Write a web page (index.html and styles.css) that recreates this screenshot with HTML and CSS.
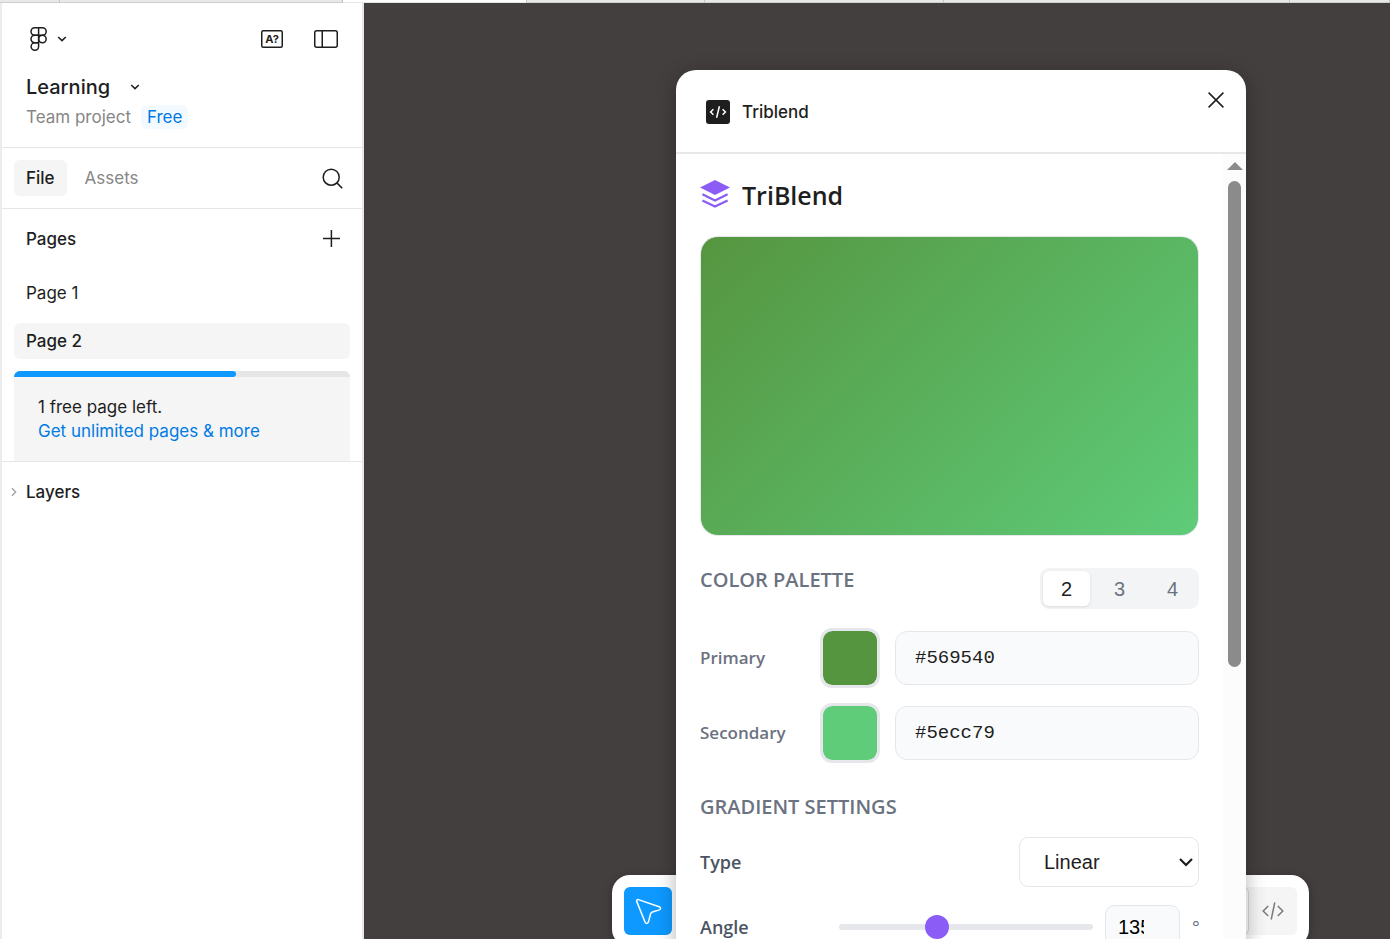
FILE: index.html
```html
<!DOCTYPE html>
<html lang="en">
<head>
  <meta charset="UTF-8">
  <meta name="viewport" content="width=device-width, initial-scale=1.0">
  <title>Learning</title>
  <link rel="stylesheet" href="styles.css">
</head>
<body>

  <div class="tab-strip">
    <span class="tab tab-pinned"></span>
    <span class="tab tab-wide"></span>
    <span class="tab tab-active"></span>
    <span class="tab tab-small"></span>
    <span class="tab tab-medium"></span>
    <span class="tab tab-large"></span>
    <span class="tab tab-rest"></span>
  </div>

  <div class="app">
    <aside class="sidebar">
      <header class="file-header">
        <div class="icon-row">
          <button class="icon-button logo-button" aria-label="Main menu">
            <svg width="18" height="24" viewBox="0 0 18 24" fill="none" stroke="#1e1e1e" stroke-width="1.5">
              <path d="M4.75 .75h7.7a3.75 3.75 0 0 1 0 7.5h-7.7a3.75 3.75 0 0 1 0-7.5z"/>
              <path d="M8.6 8.25H4.75a3.75 3.75 0 0 0 0 7.5H8.6"/>
              <circle cx="12.4" cy="12" r="3.75"/>
              <path d="M8.6 15.75H4.75a3.75 3.75 0 1 0 3.85 3.75V.75"/>
            </svg>
            <svg width="10" height="6" viewBox="0 0 10 6" fill="none" stroke="#1e1e1e" stroke-width="1.5">
              <path d="M1.2 1 5 4.6 8.8 1"/>
            </svg>
          </button>
          <div class="icon-group">
            <button class="icon-button" aria-label="Missing fonts">
              <svg width="22" height="18" viewBox="0 0 22 18">
                <rect x=".75" y=".75" width="20.5" height="16.5" rx="1.5" fill="none" stroke="#1e1e1e" stroke-width="1.5"/>
                <text class="font-glyph" x="11" y="13" text-anchor="middle">A?</text>
              </svg>
            </button>
            <button class="icon-button" aria-label="Toggle sidebar">
              <svg width="24" height="18" viewBox="0 0 24 18" fill="none" stroke="#1e1e1e" stroke-width="1.5">
                <rect x=".75" y=".75" width="22.5" height="16.5" rx="2"/>
                <path d="M8.25 .75v16.5"/>
              </svg>
            </button>
          </div>
        </div>
        <button class="file-name">
          Learning
          <svg width="10" height="6" viewBox="0 0 10 6" fill="none" stroke="#1e1e1e" stroke-width="1.5">
            <path d="M1.2 1 5 4.6 8.8 1"/>
          </svg>
        </button>
        <p class="file-team">Team project <span class="plan-badge">Free</span></p>
      </header>

      <nav class="side-tabs">
        <button class="side-tab selected">File</button>
        <button class="side-tab">Assets</button>
        <button class="icon-button push-right" aria-label="Search">
          <svg width="22" height="22" viewBox="0 0 22 22" fill="none" stroke="#1e1e1e" stroke-width="1.5">
            <circle cx="10.2" cy="10.2" r="8"/>
            <path d="M15.9 15.9 21.2 21.2"/>
          </svg>
        </button>
      </nav>

      <section class="pages">
        <div class="pages-header">
          <h2>Pages</h2>
          <button class="icon-button" aria-label="Add page">
            <svg width="18" height="18" viewBox="0 0 18 18" fill="none" stroke="#1e1e1e" stroke-width="1.5">
              <path d="M8.4 0v17M0 8.4h17"/>
            </svg>
          </button>
        </div>
        <ul class="page-list">
          <li><a href="#page-1">Page 1</a></li>
          <li><a href="#page-2" class="selected">Page 2</a></li>
        </ul>
        <div class="page-limit">
          <div class="limit-bar"><div class="limit-fill" style="width: 66%"></div></div>
          <div class="limit-text">
            <p>1 free page left.</p>
            <a href="#upgrade">Get unlimited pages &amp; more</a>
          </div>
        </div>
      </section>

      <section class="layers">
        <svg width="6" height="10" viewBox="0 0 6 10" fill="none" stroke="#a6a6a6" stroke-width="1.5">
          <path d="M1 1.2 4.6 5 1 8.8"/>
        </svg>
        <h2>Layers</h2>
      </section>
    </aside>

    <main class="canvas">
      <div class="toolbar">
        <button class="tool-button" aria-label="Move">
          <svg width="28" height="28" viewBox="0 0 28 28" fill="none" stroke="#fff" stroke-width="1.5" stroke-linejoin="round">
            <path d="M4.4 2.6 25.2 9.8c1.8.7 1.8 2.5.2 3.1l-7 2.1c-1 .4-1.5.8-1.8 1.7l-2.2 8.4c-.6 1.7-2.6 1.7-3.3.1L2.7 4.4c-.4-1.2.5-2.2 1.7-1.8z"/>
          </svg>
        </button>
        <div class="mode-switch">
          <span class="mode-current"></span>
          <button class="mode-button" aria-label="Dev mode">
            <svg width="22" height="18" viewBox="0 0 22 18" fill="none" stroke="#7a7a7a" stroke-width="1.5">
              <path d="M6.2 4 1.2 9l5 5M15.8 4l5 5-5 5M12.8 .5 9.2 17.5"/>
            </svg>
          </button>
        </div>
      </div>

      <div class="plugin">
        <header class="plugin-header">
          <svg width="24" height="24" viewBox="0 0 24 24" fill="none" stroke="#fff" stroke-width="1.5">
            <rect width="24" height="24" rx="3" fill="#1e1e1e" stroke="none"/>
            <path d="M7.4 9.2 4.6 12l2.8 2.8M16.6 9.2l2.8 2.8-2.8 2.8M13.4 6.2 10.6 17.8"/>
          </svg>
          <h1>Triblend</h1>
          <button class="close-button" aria-label="Close">
            <svg width="16" height="16" viewBox="0 0 16 16" fill="none" stroke="#1e1e1e" stroke-width="1.5">
              <path d="M.6 .6l14.8 14.8M15.4 .6.6 15.4"/>
            </svg>
          </button>
        </header>

        <div class="plugin-view">
          <div class="plugin-body">
            <div class="brand">
              <svg width="30" height="30" viewBox="0 0 30 30">
                <path d="M15 0l15 7.5L15 15 0 7.5z" fill="#8b5cf6"/>
                <path d="M2.4 14.2 15 20.5l12.6-6.3M2.4 20.4 15 26.6l12.6-6.2" fill="none" stroke="#8b5cf6" stroke-width="2.2"/>
              </svg>
              <h2>TriBlend</h2>
            </div>

            <div class="preview"></div>

            <section class="palette">
              <div class="section-header">
                <h3>COLOR PALETTE</h3>
                <div class="count-switch">
                  <button class="active">2</button>
                  <button>3</button>
                  <button>4</button>
                </div>
              </div>
              <div class="color-row">
                <label for="primary-hex">Primary</label>
                <input type="color" aria-label="Primary color" value="#569540">
                <input type="text" class="hex-input" id="primary-hex" value="#569540">
              </div>
              <div class="color-row">
                <label for="secondary-hex">Secondary</label>
                <input type="color" aria-label="Secondary color" value="#5ecc79">
                <input type="text" class="hex-input" id="secondary-hex" value="#5ecc79">
              </div>
            </section>

            <section class="settings">
              <h3>GRADIENT SETTINGS</h3>
              <div class="setting-row">
                <label for="type">Type</label>
                <div class="select-wrap">
                  <select id="type">
                    <option>Linear</option>
                    <option>Radial</option>
                  </select>
                  <svg class="select-arrow" width="14" height="9" viewBox="0 0 14 9" fill="none" stroke="#1e1e1e" stroke-width="2.2">
                    <path d="M1 1l6 6 6-6"/>
                  </svg>
                </div>
              </div>
              <div class="setting-row">
                <label for="angle">Angle</label>
                <div class="angle-control">
                  <input type="range" id="angle" min="0" max="360" value="135">
                  <input type="text" class="angle-value" aria-label="Angle in degrees" value="135">
                  <span class="unit">°</span>
                </div>
              </div>
            </section>
          </div>

          <div class="scrollbar">
            <span class="scroll-up"></span>
            <span class="scroll-thumb"></span>
          </div>
        </div>
      </div>
    </main>
  </div>

</body>
</html>
```
FILE: styles.css
```css
* {
  box-sizing: border-box;
}

body {
  margin: 0;
  height: 100vh;
  display: flex;
  flex-direction: column;
  overflow: hidden;
  font-family: Inter, "Liberation Sans", sans-serif;
  font-size: 17px;
  line-height: 24px;
  color: #1e1e1e;
  background-color: #fff;
}

h1, h2, h3, p, ul {
  margin: 0;
  padding: 0;
}

button {
  border: none;
  padding: 0;
  background: none;
  font: inherit;
  color: inherit;
  cursor: pointer;
}

svg {
  display: block;
  flex: none;
}

/* browser tabs above the app */
.tab-strip {
  display: flex;
  flex: none;
  height: 3px;
}

.tab {
  background-color: #e8e8e8;
  border-right: 1px solid #c4c4c4;
  border-bottom: 1px solid #cfcfcf;
}

.tab-pinned {
  width: 60px;
}

.tab-wide {
  width: 283px;
}

.tab-active {
  width: 184px;
  background-color: #fff;
  border-bottom-color: #e6e6e6;
}

.tab-small {
  width: 178px;
}

.tab-medium {
  width: 239px;
}

.tab-large {
  width: 346px;
}

.tab-rest {
  flex: 1;
}

.app {
  display: flex;
  flex: 1;
  min-height: 0;
}

/* left sidebar */
.sidebar {
  width: 364px;
  flex: none;
  background-color: #fff;
  border-left: 2px solid #ececec;
  border-right: 2px solid #e6e6e6;
}

.sidebar h2 {
  font-size: 17px;
  font-weight: 500;
}

.icon-button {
  min-width: 36px;
  height: 36px;
  display: flex;
  align-items: center;
  justify-content: center;
}

.file-header {
  padding: 12px 18px 18px 24px;
  border-bottom: 1px solid #e6e6e6;
}

.icon-row {
  display: flex;
  align-items: center;
  justify-content: space-between;
  height: 48px;
  margin-bottom: 12px;
}

.logo-button {
  gap: 9px;
  padding-left: 4px;
}

.icon-group {
  display: flex;
  gap: 18px;
}

.font-glyph {
  font-size: 11px;
  font-weight: 700;
  fill: #1e1e1e;
}

.file-name {
  display: flex;
  align-items: center;
  gap: 20px;
  margin-bottom: 6px;
  font-size: 20px;
  font-weight: 500;
}

.file-team {
  display: flex;
  align-items: center;
  gap: 10px;
  color: #868686;
}

.plan-badge {
  padding: 0 6px;
  border-radius: 6px;
  background-color: #f2f9ff;
  color: #007be5;
}

.side-tabs {
  display: flex;
  align-items: center;
  gap: 6px;
  height: 61px;
  padding: 0 12px;
  border-bottom: 1px solid #e6e6e6;
}

.side-tab {
  height: 36px;
  padding: 0 12px;
  border-radius: 6px;
  color: #868686;
}

.side-tab.selected {
  background-color: #f5f5f5;
  color: #1e1e1e;
  font-weight: 500;
}

.push-right {
  margin-left: auto;
}

.pages {
  border-bottom: 1px solid #e6e6e6;
  padding: 0 12px;
}

.pages-header {
  display: flex;
  align-items: center;
  justify-content: space-between;
  height: 60px;
  padding-left: 12px;
}

.page-list {
  display: flex;
  flex-direction: column;
  gap: 12px;
  margin: 6px 0 12px;
  list-style: none;
}

.page-list a {
  display: block;
  padding: 6px 12px;
  border-radius: 6px;
  color: #1e1e1e;
  text-decoration: none;
}

.page-list a.selected {
  background-color: #f5f5f5;
  font-weight: 500;
}

.page-limit {
  border-radius: 6px 6px 0 0;
  background-color: #f5f5f5;
  overflow: hidden;
}

.limit-bar {
  height: 6px;
  background-color: #e6e6e6;
}

.limit-fill {
  height: 6px;
  border-radius: 0 3px 3px 0;
  background-color: #0d99ff;
}

.limit-text {
  padding: 18px 24px;
}

.limit-text a {
  display: block;
  color: #007be5;
  text-decoration: none;
}

.layers {
  display: flex;
  align-items: center;
  gap: 9px;
  height: 60px;
  padding-left: 9px;
}

/* canvas and bottom toolbar */
.canvas {
  position: relative;
  flex: 1;
  min-width: 0;
  overflow: hidden;
  background-color: #433f3e;
}

.toolbar {
  position: absolute;
  right: 81px;
  bottom: -8px;
  width: 697px;
  display: flex;
  justify-content: space-between;
  padding: 12px;
  border-radius: 18px;
  background-color: #fff;
  box-shadow: 0 2px 8px rgba(0, 0, 0, 0.3);
}

.tool-button {
  width: 48px;
  height: 48px;
  display: flex;
  align-items: center;
  justify-content: center;
  border-radius: 6px;
  background-color: #0d99ff;
}

.mode-switch {
  display: flex;
  border-radius: 6px;
  background-color: #f5f5f5;
}

.mode-current {
  width: 48px;
  border: 1px solid #d9d9d9;
  border-radius: 6px;
  background-color: #fff;
}

.mode-button {
  width: 48px;
  display: flex;
  align-items: center;
  justify-content: center;
}

/* plugin window */
.plugin {
  position: absolute;
  top: 67px;
  right: 144px;
  bottom: -40px;
  width: 570px;
  display: flex;
  flex-direction: column;
  border-radius: 20px;
  background-color: #fff;
  box-shadow: 0 4px 20px rgba(0, 0, 0, 0.3);
  overflow: hidden;
}

.plugin-header {
  display: flex;
  align-items: center;
  gap: 12px;
  flex: none;
  height: 84px;
  padding: 6px 6px 4px 30px;
  border-bottom: 2px solid #e8e8e8;
}

.plugin-header h1 {
  font-size: 17px;
  font-weight: 500;
}

.close-button {
  width: 48px;
  height: 48px;
  display: flex;
  align-items: center;
  justify-content: center;
  align-self: flex-start;
  margin-left: auto;
}

.plugin-view {
  display: flex;
  flex: 1;
  min-height: 0;
}

.plugin-body {
  flex: 1;
  padding: 24px;
  font-family: "Open Sans", "Noto Sans", sans-serif;
  overflow: hidden;
}

.brand {
  display: flex;
  align-items: center;
  gap: 12px;
  height: 34px;
  margin-bottom: 24px;
}

.brand h2 {
  font-size: 25px;
  font-weight: 600;
  line-height: 34px;
}

.preview {
  height: 300px;
  margin-bottom: 32px;
  border: 1px solid #e5e7eb;
  border-radius: 18px;
  background: linear-gradient(135deg, #569540, #5ecc79);
}

.plugin-body h3 {
  font-size: 20px;
  font-weight: 600;
  line-height: 24px;
  color: #6b7280;
}

.section-header {
  display: flex;
  align-items: flex-start;
  justify-content: space-between;
  margin-bottom: 19px;
}

.count-switch {
  display: flex;
  gap: 6px;
  padding: 3px;
  border-radius: 9px;
  background-color: #f3f4f6;
}

.count-switch button {
  width: 47px;
  height: 35px;
  border-radius: 6px;
  font-family: "Liberation Sans", sans-serif;
  font-size: 20px;
  color: #6b7280;
}

.count-switch .active {
  background-color: #fff;
  color: #1e1e1e;
  box-shadow: 0 1px 3px rgba(0, 0, 0, 0.1);
}

.color-row {
  display: flex;
  align-items: center;
  gap: 15px;
  margin-bottom: 15px;
}

.color-row label {
  width: 105px;
  font-size: 17px;
  font-weight: 600;
  color: #6b7280;
}

input[type="color"] {
  appearance: none;
  width: 60px;
  height: 60px;
  padding: 0;
  border: 3px solid #e5e7eb;
  border-radius: 12px;
  background: #e5e7eb;
  overflow: hidden;
}

input[type="color"]::-webkit-color-swatch-wrapper {
  padding: 0;
}

input[type="color"]::-webkit-color-swatch {
  border: none;
  border-radius: 9px;
}

.hex-input {
  flex: 1;
  min-width: 0;
  height: 54px;
  padding: 0 19px;
  border: 1px solid #e5e7eb;
  border-radius: 12px;
  background-color: #f9fafb;
  font-family: "Liberation Mono", monospace;
  font-size: 19px;
  color: #1e1e1e;
}

.settings {
  display: flex;
  flex-direction: column;
  gap: 18px;
  margin-top: 32px;
}

.setting-row {
  display: flex;
  align-items: center;
  justify-content: space-between;
}

.setting-row label {
  font-size: 18px;
  font-weight: 600;
  color: #4b5563;
}

.select-wrap {
  position: relative;
}

.select-wrap select {
  appearance: none;
  display: block;
  width: 180px;
  height: 50px;
  padding: 0 24px;
  border: 1px solid #e5e7eb;
  border-radius: 9px;
  background-color: #fff;
  font-family: "Liberation Sans", sans-serif;
  font-size: 20px;
  color: #1e1e1e;
}

.select-arrow {
  position: absolute;
  top: 21px;
  right: 6px;
  pointer-events: none;
}

.angle-control {
  display: flex;
  align-items: center;
  gap: 12px;
}

input[type="range"] {
  appearance: none;
  width: 254px;
  height: 6px;
  margin: 0;
  border-radius: 3px;
  background-color: #e5e7eb;
}

input[type="range"]::-webkit-slider-thumb {
  appearance: none;
  width: 24px;
  height: 24px;
  border-radius: 50%;
  background-color: #8b5cf6;
}

.angle-value {
  width: 75px;
  height: 44px;
  padding: 0 35px 0 12px;
  border: 1px solid #e5e7eb;
  border-radius: 9px;
  background-color: #f9fafb;
  font-family: "Liberation Sans", sans-serif;
  font-size: 20px;
  color: #000;
}

.unit {
  width: 7px;
  font-size: 18px;
  color: #6b7280;
}

.scrollbar {
  display: flex;
  flex-direction: column;
  align-items: center;
  gap: 11px;
  width: 23px;
  padding-top: 8px;
  background-color: #fcfcfc;
}

.scroll-up {
  border: 8px solid transparent;
  border-top-width: 0;
  border-bottom-color: #8b8b8b;
}

.scroll-thumb {
  width: 13px;
  height: 486px;
  border-radius: 7px;
  background-color: #8b8b8b;
}
```
